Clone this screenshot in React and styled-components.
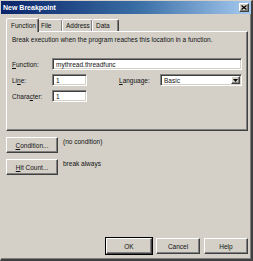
import React from "react";
import styled, { createGlobalStyle, css } from "styled-components";

const Global = createGlobalStyle`
  html, body { margin: 0; padding: 0; background: #d4d0c8; }
  body { font-family: "Liberation Sans", Arial, sans-serif; }
`;

const raised = css`
  border-style: solid;
  border-width: 1px;
  border-color: #ffffff #404040 #404040 #ffffff;
  box-shadow: inset -1px -1px 0 #808080;
`;

const sunken = css`
  border-style: solid;
  border-width: 1px;
  border-color: #808080 #ffffff #ffffff #808080;
  box-shadow: inset 1px 1px 0 #404040, inset -1px -1px 0 #d4d0c8;
`;

const Window = styled.div`
  box-sizing: border-box;
  width: 253px;
  height: 261px;
  background: #d4d0c8;
  border-style: solid;
  border-width: 1px 2px 2px 1px;
  border-color: #d4d0c8 #404040 #404040 #d4d0c8;
  box-shadow: inset -1px -1px 0 #808080;
  display: flex;
  flex-direction: column;
  font-size: 6.5px;
  color: #111;
`;

const TitleBar = styled.div`
  height: 13px;
  display: flex;
  align-items: center;
  padding: 0 2px 0 2px;
  background: linear-gradient(90deg, #0a246a 0%, #3a6ea5 55%, #a6caf0 100%);
  color: #fff;
  font-weight: bold;
  font-size: 7px;
`;

const Title = styled.span`
  flex: 1;
`;

const CloseButton = styled.div`
  box-sizing: border-box;
  width: 10px;
  height: 9px;
  background: #d4d0c8;
  ${raised};
  display: flex;
  align-items: center;
  justify-content: center;
`;

const Body = styled.div`
  flex: 1;
  display: flex;
  flex-direction: column;
  padding: 3px 3px 5px 5px;
`;

const TabRow = styled.div`
  display: flex;
  align-items: flex-end;
  height: 14px;
`;

const Tab = styled.div`
  box-sizing: border-box;
  height: ${(p) => (p.$active ? 14 : 12)}px;
  padding: 0 ${(p) => (p.$active ? 4 : 3)}px;
  width: ${(p) => p.$w}px;
  display: flex;
  align-items: center;
  background: #d4d0c8;
  border-style: solid;
  border-width: 1px 1px 0 1px;
  border-color: #ffffff #404040 transparent #ffffff;
  box-shadow: inset -1px 0 0 #808080;
  border-radius: 2px 2px 0 0;
  margin-right: ${(p) => (p.$active ? -1 : 0)}px;
  position: relative;
  z-index: ${(p) => (p.$active ? 2 : 1)};
  margin-bottom: ${(p) => (p.$active ? -1 : 0)}px;
  ${(p) => !p.$active && css`margin-left: -1px;`}
`;

const Panel = styled.div`
  box-sizing: border-box;
  width: 242px;
  height: 100px;
  ${raised};
  padding: 2px 5px 0 5px;
  display: flex;
  flex-direction: column;
`;

const Description = styled.div`
  height: 12px;
  line-height: 12px;
  margin-bottom: 12px;
`;

const FormRow = styled.div`
  display: flex;
  align-items: center;
  height: 12px;
  margin-bottom: 4px;
`;

const Label = styled.label`
  width: ${(p) => p.$w}px;
  flex: none;
  margin-left: ${(p) => p.$ml || 0}px;
`;

const Input = styled.div`
  box-sizing: border-box;
  height: 12px;
  width: ${(p) => (p.$w ? `${p.$w}px` : "auto")};
  flex: ${(p) => (p.$w ? "none" : "1")};
  background: #fff;
  ${sunken};
  padding: 0 3px;
  display: flex;
  align-items: center;
  justify-content: space-between;
`;

const DropButton = styled.div`
  box-sizing: border-box;
  width: 9px;
  height: 8px;
  background: #d4d0c8;
  ${raised};
  display: flex;
  align-items: center;
  justify-content: center;
  margin-right: -2px;
`;

const ActionRow = styled.div`
  display: flex;
  align-items: flex-start;
  gap: 5px;
  margin-top: ${(p) => p.$mt}px;
`;

const Button = styled.button`
  box-sizing: border-box;
  width: ${(p) => p.$w}px;
  height: 16px;
  padding: 0;
  font-family: inherit;
  font-size: 6.5px;
  color: #111;
  background: #d4d0c8;
  ${raised};
  ${(p) =>
    p.$default &&
    css`
      outline: 1px solid #000;
      outline-offset: 0;
    `}
`;

const ActionText = styled.span`
  line-height: 10px;
`;

const Footer = styled.div`
  margin-top: auto;
  display: flex;
  justify-content: flex-end;
  gap: 4px;
`;

export default function App() {
  return (
    <>
      <Global />
      <Window>
        <TitleBar>
          <Title>New Breakpoint</Title>
          <CloseButton>
            <svg width="6" height="5" viewBox="0 0 6 5">
              <path d="M0.5 0.5 L5.5 4.5 M5.5 0.5 L0.5 4.5" stroke="#000" strokeWidth="1.3" />
            </svg>
          </CloseButton>
        </TitleBar>
        <Body>
          <TabRow>
            <Tab $active $w={33}>Function</Tab>
            <Tab $w={26}>File</Tab>
            <Tab $w={31}>Address</Tab>
            <Tab $w={27}>Data</Tab>
          </TabRow>
          <Panel>
            <Description>
              Break execution when the program reaches this location in a function.
            </Description>
            <FormRow>
              <Label $w={40}>
                <u>F</u>unction:
              </Label>
              <Input>mythread.threadfunc</Input>
            </FormRow>
            <FormRow>
              <Label $w={40}>
                Li<u>n</u>e:
              </Label>
              <Input $w={35}>1</Input>
              <Label $w={41} $ml={32}>
                <u>L</u>anguage:
              </Label>
              <Input>
                <span>Basic</span>
                <DropButton>
                  <svg width="5" height="3" viewBox="0 0 5 3">
                    <path d="M0 0 H5 L2.5 3 Z" fill="#000" />
                  </svg>
                </DropButton>
              </Input>
            </FormRow>
            <FormRow>
              <Label $w={40}>
                Chara<u>c</u>ter:
              </Label>
              <Input $w={35}>1</Input>
            </FormRow>
          </Panel>
          <ActionRow $mt={6}>
            <Button $w={52}>
              <u>C</u>ondition...
            </Button>
            <ActionText>(no condition)</ActionText>
          </ActionRow>
          <ActionRow $mt={6}>
            <Button $w={52}>
              <u>H</u>it Count...
            </Button>
            <ActionText>break always</ActionText>
          </ActionRow>
          <Footer>
            <Button $w={46} $default>
              OK
            </Button>
            <Button $w={44}>Cancel</Button>
            <Button $w={44}>Help</Button>
          </Footer>
        </Body>
      </Window>
    </>
  );
}
